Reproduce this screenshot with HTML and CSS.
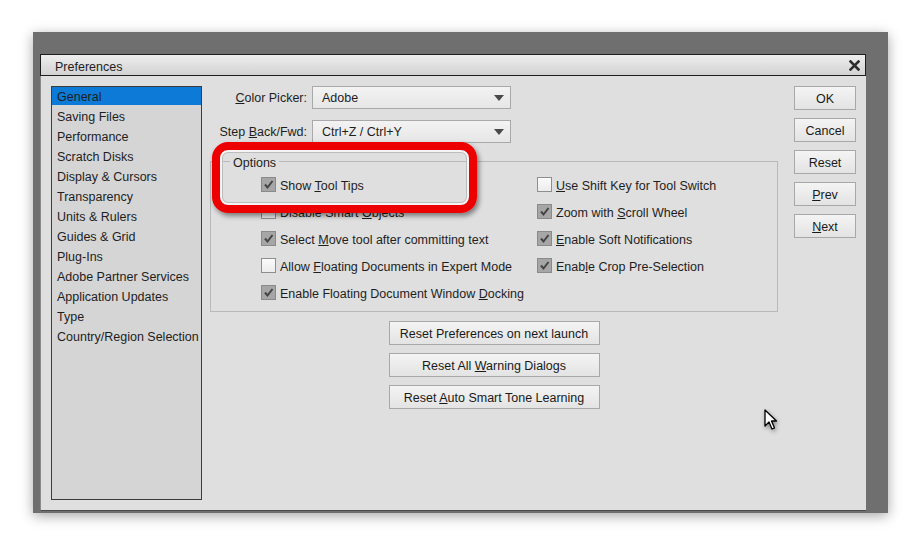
FILE: index.html
```html
<!DOCTYPE html>
<html lang="en">
<head>
    <meta charset="UTF-8">
    <title>Preferences</title>
    <link rel="stylesheet" href="styles.css">
</head>
<body>
    <div class="frame">
        <div class="dialog">
            <div class="titlebar">
                <span class="title">Preferences</span>
                <svg class="close" width="11" height="11" viewBox="0 0 11 11">
                    <path d="M1.5 1.5 L9.5 9.5 M9.5 1.5 L1.5 9.5" stroke="#2e2e2e" stroke-width="2.6" stroke-linecap="square"/>
                </svg>
            </div>
            <div class="dialog-body">
                <ul class="sidebar">
                    <li class="active">General</li>
                    <li>Saving Files</li>
                    <li>Performance</li>
                    <li>Scratch Disks</li>
                    <li>Display &amp; Cursors</li>
                    <li>Transparency</li>
                    <li>Units &amp; Rulers</li>
                    <li>Guides &amp; Grid</li>
                    <li>Plug-Ins</li>
                    <li>Adobe Partner Services</li>
                    <li>Application Updates</li>
                    <li>Type</li>
                    <li>Country/Region Selection</li>
                </ul>

                <div class="content">
                    <div class="field-row">
                        <label class="field-label"><u>C</u>olor Picker:</label>
                        <div class="select">Adobe<span class="arrow"></span></div>
                    </div>
                    <div class="field-row">
                        <label class="field-label">Step <u>B</u>ack/Fwd:</label>
                        <div class="select">Ctrl+Z / Ctrl+Y<span class="arrow"></span></div>
                    </div>

                    <fieldset class="options">
                        <legend>Options</legend>
                        <div class="check-grid">
                            <div class="check on"><span>Show <u>T</u>ool Tips</span></div>
                            <div class="check"><span><u>U</u>se Shift Key for Tool Switch</span></div>
                            <div class="check"><span>Disable Smart <u>O</u>bjects</span></div>
                            <div class="check on"><span>Zoom with <u>S</u>croll Wheel</span></div>
                            <div class="check on"><span>Select <u>M</u>ove tool after committing text</span></div>
                            <div class="check on"><span><u>E</u>nable Soft Notifications</span></div>
                            <div class="check"><span>Allow <u>F</u>loating Documents in Expert Mode</span></div>
                            <div class="check on"><span>Enab<u>l</u>e Crop Pre-Selection</span></div>
                            <div class="check on"><span>Enable Floating Document Window <u>D</u>ocking</span></div>
                        </div>
                    </fieldset>

                    <div class="reset-buttons">
                        <button class="btn wide">Reset Preferences on next launch</button>
                        <button class="btn wide">Reset All <u>W</u>arning Dialogs</button>
                        <button class="btn wide">Reset <u>A</u>uto Smart Tone Learning</button>
                    </div>
                </div>

                <div class="actions">
                    <button class="btn">OK</button>
                    <button class="btn">Cancel</button>
                    <button class="btn">Reset</button>
                    <button class="btn"><u>P</u>rev</button>
                    <button class="btn"><u>N</u>ext</button>
                </div>
            </div>

            <!-- annotation -->
            <div class="highlight"></div>
            <svg class="cursor" width="14" height="22" viewBox="0 0 14 22">
                <path d="M1 1 L1 17 L5 13 L8 20 L10.5 19 L7.5 12 L12.5 12 Z" fill="#fff" stroke="#000" stroke-width="1.3" stroke-linejoin="round"/>
            </svg>
        </div>
    </div>
</body>
</html>
```

FILE: styles.css
```css
* {
    margin: 0;
    padding: 0;
    box-sizing: border-box;
}

body {
    font-family: "Liberation Sans", Arial, sans-serif;
    font-size: 12.5px;
    color: #1e1e1e;
    background: #fff;
    width: 920px;
    height: 545px;
    overflow: hidden;
}

.frame {
    margin: 32px 0 0 33px;
    width: 855px;
    height: 481px;
    background: #6f6f6f;
    padding: 22px 22px 0 7px;
    box-shadow: 0 3px 12px rgba(0, 0, 0, 0.35);
}

.dialog {
    position: relative;
    width: 826px;
    height: 457px;
    background: #dfdfdf;
    border-bottom: 1px solid #4a4a4a;
    border-left: 1px solid #8a8a8a;
}

.titlebar {
    height: 22px;
    margin-left: -1px;
    border: 1px solid #1e1e1e;
    background: linear-gradient(#eeeeee, #d2d2d2);
    display: flex;
    align-items: center;
    justify-content: space-between;
    padding: 0 5px 0 14px;
}

.title {
    color: #222;
    padding-top: 3px;
}

.dialog-body {
    display: flex;
    padding: 10px 10px 0 10px;
}

.sidebar {
    list-style: none;
    width: 151px;
    height: 414px;
    background: #d5d5d5;
    border: 1px solid #3c3c3c;
    flex-shrink: 0;
}

.sidebar li {
    height: 18px;
    line-height: 15px;
    padding-top: 3px;
    margin-bottom: 2px;
    padding-left: 5px;
    white-space: nowrap;
}

.sidebar li.active {
    background: #0c7ad6;
}

.content {
    width: 568px;
    margin-left: 8px;
    flex-shrink: 0;
}

.field-row {
    display: flex;
    align-items: center;
    margin-bottom: 11px;
}

.field-label {
    width: 97px;
    text-align: right;
    margin-right: 5px;
}

.select {
    position: relative;
    width: 199px;
    height: 23px;
    line-height: 19px;
    padding: 2px 0 0 9px;
    border: 1px solid #a9a9a9;
    background: linear-gradient(#f3f3f3, #e6e6e6);
}

.arrow {
    position: absolute;
    right: 6px;
    top: 8px;
    width: 0;
    height: 0;
    border-left: 5px solid transparent;
    border-right: 5px solid transparent;
    border-top: 6px solid #4a4a4a;
}

.options {
    border: 1px solid #b9b9b9;
    height: 159px;
    margin-top: -1px;
    padding: 0 0 0 19px;
}

.options legend {
    padding: 3px 3px 0;
    line-height: 14px;
}

.check-grid {
    display: grid;
    grid-template-columns: 276px 1fr;
    grid-auto-rows: 27px;
    margin-left: 31px;
    margin-top: 1px;
}

.check {
    display: flex;
    align-items: center;
    white-space: nowrap;
}

.check span {
    padding-top: 2px;
}

.check::before {
    content: "";
    width: 13px;
    height: 13px;
    margin-right: 4px;
    border: 1px solid #8e8e8e;
    background: linear-gradient(#fbfbfb, #ececec);
    flex-shrink: 0;
}

.check.on::before {
    background-color: #a6a6a6;
    background-image: url("data:image/svg+xml,%3Csvg xmlns='http://www.w3.org/2000/svg' width='11' height='11'%3E%3Cpath d='M2 5.5 L4.5 8.5 L9.5 2' fill='none' stroke='%23444' stroke-width='2'/%3E%3C/svg%3E");
    background-repeat: no-repeat;
    background-position: center;
    border-color: #8a8a8a;
}

.reset-buttons {
    display: flex;
    flex-direction: column;
    align-items: center;
    gap: 8px;
    margin-top: 9px;
}

.btn {
    font-family: inherit;
    font-size: 12.5px;
    color: #1a1a1a;
    width: 62px;
    height: 24px;
    padding-top: 1px;
    border: 1px solid #a8a8a8;
    background: linear-gradient(#f4f4f4, #e3e3e3);
}

.btn.wide {
    width: 211px;
}

.actions {
    display: flex;
    flex-direction: column;
    gap: 8px;
    margin-left: 16px;
}

.highlight {
    position: absolute;
    left: 171px;
    top: 88px;
    width: 265px;
    height: 71px;
    border: 8px solid #ec0000;
    border-radius: 16px;
    box-shadow: 2px 3px 5px rgba(0, 0, 0, 0.45), inset 0 0 0 2px #f4f4f4, inset 0 0 0 3px #bdbdbd;
}

.cursor {
    position: absolute;
    left: 723px;
    top: 355px;
    filter: drop-shadow(1px 2px 2px rgba(0, 0, 0, 0.4));
}
```
